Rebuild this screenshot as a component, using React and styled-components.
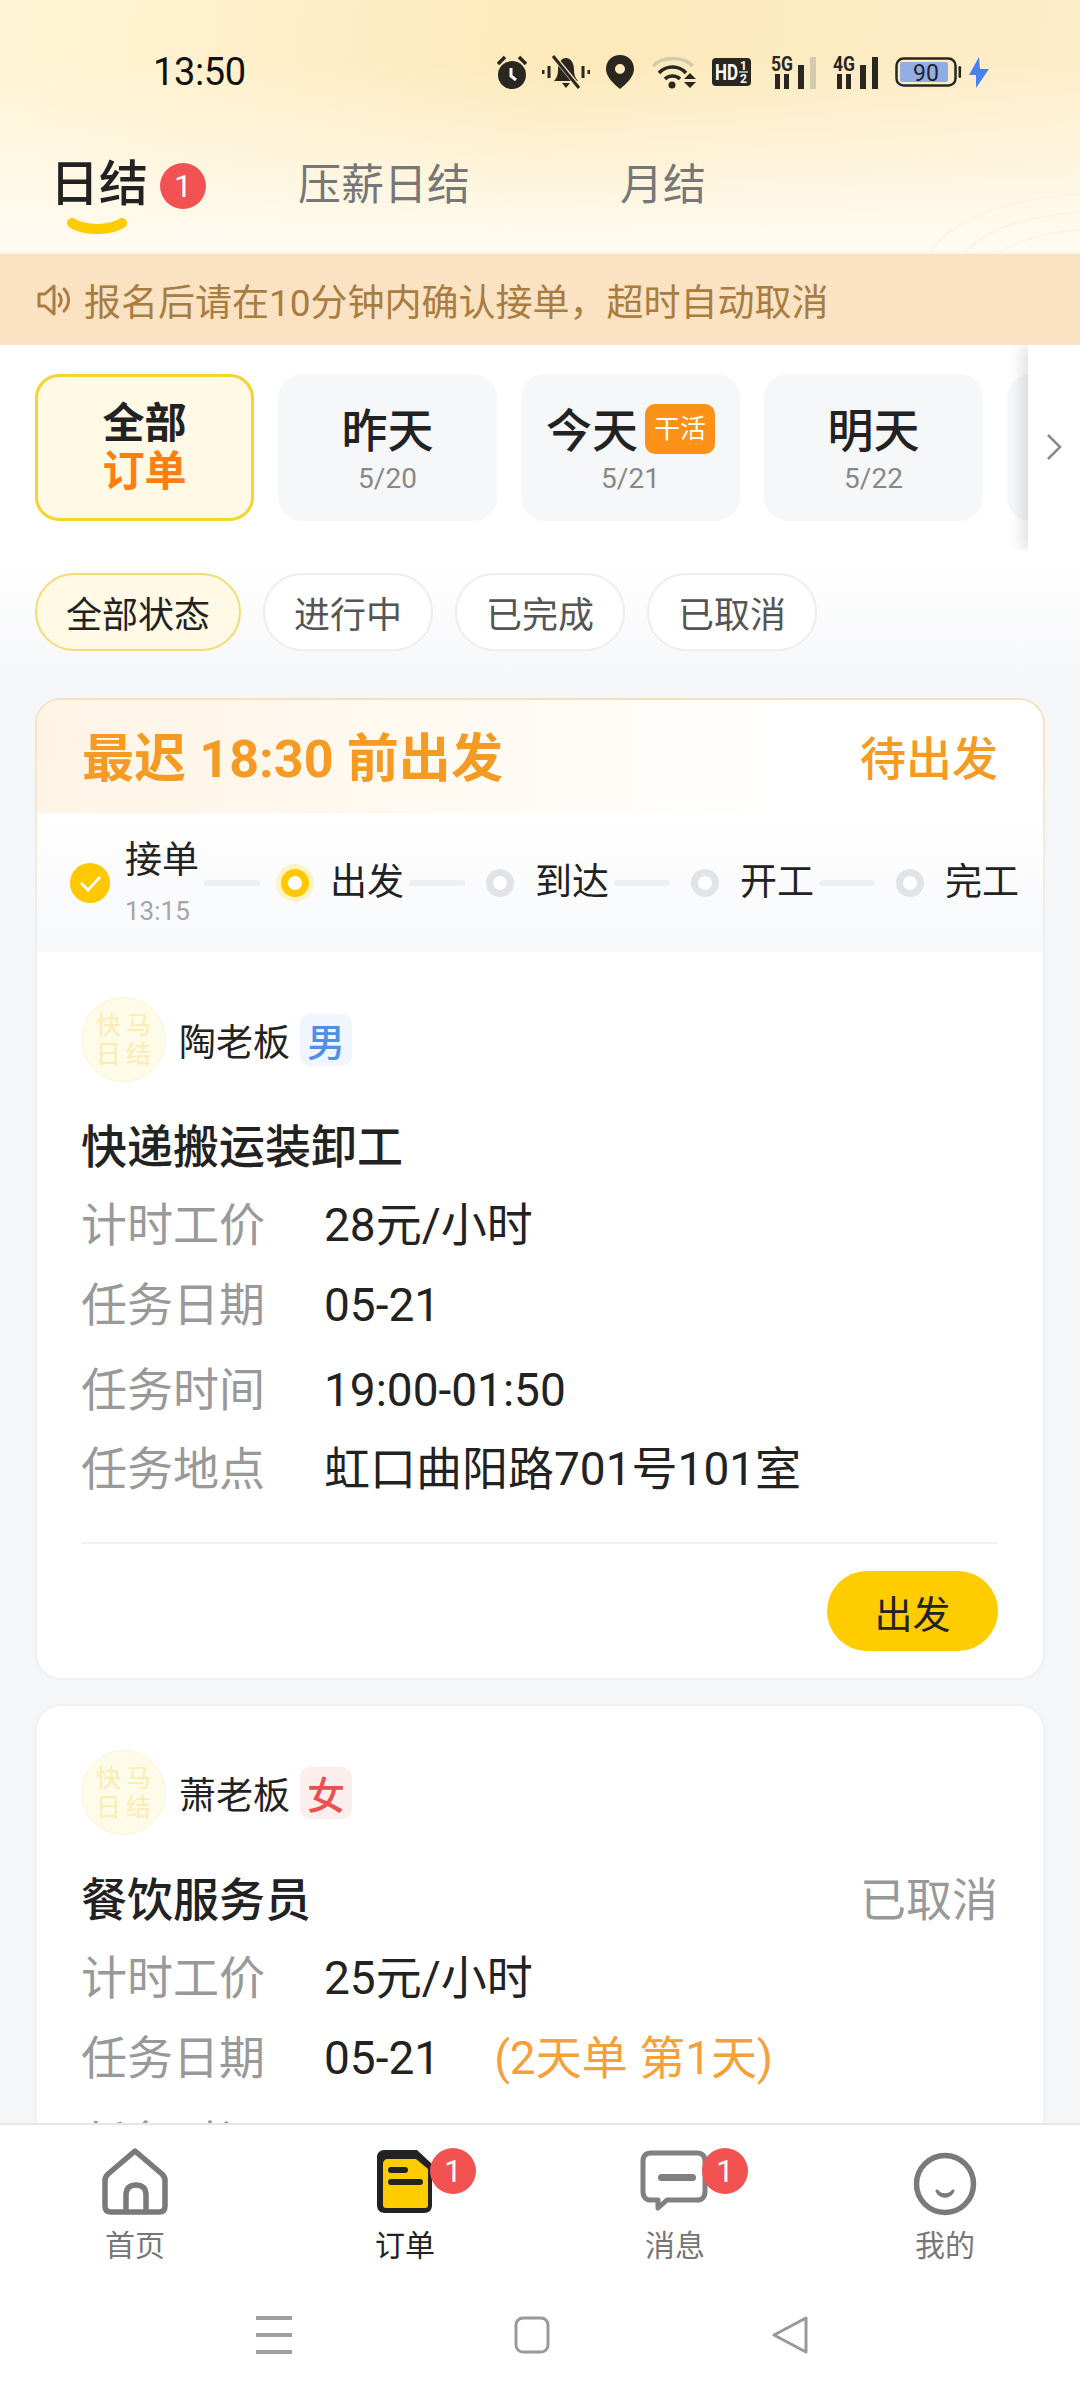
import React from 'react';
import styled, { createGlobalStyle } from 'styled-components';

const Global = createGlobalStyle`
  html, body { margin: 0; padding: 0; background: #fff; }
  body { font-family: Roboto, "Noto Sans CJK SC", sans-serif; color: #222; }
  * { box-sizing: border-box; }
`;

const Page = styled.div`
  width: 1080px; height: 2400px; display: flex; flex-direction: column; overflow: hidden;
  background: linear-gradient(180deg, #fff 0, #fff 560px, #f5f6f8 690px, #f5f6f8 100%);
`;
const Header = styled.header`
  position: relative; height: 254px; flex: none; overflow: hidden;
  border-bottom: 2px solid #fff6e6;
  background:
    linear-gradient(180deg, rgba(255,251,241,0) 25%, #fffbf1 98%),
    linear-gradient(100deg, #fff5d6 0%, #feeec6 30%, #fde9b9 50%, #fdebc2 75%, #feeeca 100%);
`;
const Arcs = styled.svg`
  position: absolute; right: 0; bottom: 0; width: 150px; height: 60px;
`;
const StatusBar = styled.div`
  height: 144px; display: flex; align-items: center; padding-left: 153px;
`;
const Clock = styled.div`
  width: 343px; font-size: 38px; color: #111; line-height: 44px; letter-spacing: -0.4px;
`;
const StatusIcons = styled.div`display: flex; align-items: center;`;
const SIcon = styled.svg`
  flex: none; margin-left: ${p => p.$ml || 0}px; display: block;
`;
const SvgLabel = styled.text`
  font-family: Roboto, sans-serif; font-weight: ${p => p.$w || 700};
`;
const Tabs = styled.nav`display: flex; gap: 150px; padding: 10px 0 0 50px;`;
const Tab = styled.div`
  position: relative; font-size: ${p => p.$active ? 49 : 43}px; line-height: 62px;
  font-weight: ${p => p.$active ? 500 : 400}; color: ${p => p.$active ? '#222' : '#777'};
`;
const Badge = styled.span`
  position: absolute; width: 46px; height: 46px; border-radius: 50%; background: #f25352; color: #fff;
  font-size: 32px; line-height: 46px; text-align: center; font-weight: 400;
  left: ${p => p.$x}px; top: ${p => p.$y}px;
`;
const Smile = styled.svg`position: absolute; left: 16px; top: 64px; width: 62px; height: 24px;`;
const Notice = styled.div`
  height: 91px; flex: none; background: #fae2c2; display: flex; align-items: center; padding-left: 36px;
  gap: 13px; color: #a97c40; font-size: 37px;
`;
const DateSection = styled.section`display: flex; height: 205px; flex: none; overflow: hidden;`;
const DateScroller = styled.div`
  flex: 1; min-width: 0; overflow: hidden; display: flex; gap: 24px; padding: 29px 0 0 35px; align-items: flex-start;
`;
const DateCard = styled.div`
  flex: none; width: 219px; height: 147px; border-radius: 24px; background: ${p => p.$on ? '#fff9e6' : '#f6f7f9'};
  border: ${p => p.$on ? '3px solid #f6d32e' : 'none'};
  display: flex; flex-direction: column; align-items: center; justify-content: center;
  padding-top: ${p => p.$on ? 0 : 5}px;
`;
const AllLine = styled.div`
  font-size: 42px; line-height: 48px; font-weight: 700; color: ${p => p.$c || '#222'};
`;
const DayRow = styled.div`
  display: flex; align-items: center; gap: 7px; font-size: 46px; line-height: 54px; font-weight: 500; color: #222;
`;
const Work = styled.span`
  width: 70px; height: 50px; border-radius: 10px; background: #fb9116; color: #fff; font-size: 26px; font-weight: 400;
  display: flex; align-items: center; justify-content: center; margin-top: -4px;
`;
const DayDate = styled.div`font-size: 28px; line-height: 34px; color: #888; margin-top: 4px;`;
const More = styled.div`
  width: 52px; flex: none; background: #fff; box-shadow: -8px 0 12px rgba(0,0,0,.1);
  display: flex; align-items: flex-start; justify-content: center; padding: 89px 0 0 0;
`;
const Filters = styled.div`display: flex; gap: 22px; padding: 23px 35px 47px; flex: none;`;
const Chip = styled.div`
  height: 78px; border-radius: 39px; padding: 0 29px; font-size: 36px; display: flex; align-items: center;
  border: 2px solid ${p => p.$on ? '#f3dc72' : '#eeeeee'};
  background: ${p => p.$on ? '#fff9e6' : '#fff'}; color: ${p => p.$on ? '#222' : '#555'};
`;
const List = styled.main`
  flex: 1; min-height: 0; overflow: hidden; padding: 0 35px 0 35px; display: flex; flex-direction: column; gap: 24px;
`;
const Card = styled.article`
  flex: none; border-radius: 26px; overflow: hidden; border: 2px solid transparent;
  background:
    linear-gradient(#fff, #fff) padding-box,
    ${p => p.$warm
      ? 'linear-gradient(180deg, #f8dfbd 0, #f8e8d2 120px, #eff0f2 260px) border-box'
      : 'linear-gradient(#f0f1f3, #f0f1f3) border-box'};
`;
const CardHead = styled.div`
  height: 113px; display: flex; align-items: center; justify-content: space-between; padding: 0 45px 4px;
  background: linear-gradient(90deg, #fff4e6 0%, #fffaf3 45%, #fff 75%);
  color: #f59a23;
`;
const Deadline = styled.div`font-size: 52px; font-weight: 700; letter-spacing: 0.1px;`;
const HeadStatus = styled.div`font-size: 46px; font-weight: 500;`;
const Steps = styled.div`
  height: 139px; display: flex; align-items: center; gap: 7px; padding-left: 25px;
  background: linear-gradient(180deg, #fff 0%, #f7f8fa 100%);
`;
const Slot = styled.div`
  width: 56px; height: 56px; flex: none; display: flex; align-items: center; justify-content: center;
`;
const Dot = styled.span`
  border-radius: 50%; display: block; width: 28px; height: 28px; background: #fff;
  ${p => p.$now
    ? 'border:7px solid #ffc800;box-shadow:0 0 0 5px #fff3c4;'
    : 'border:7px solid #e2e3e6;'}
`;
const StepText = styled.div`
  width: 72px; flex: none; display: flex; flex-direction: column; font-size: 37px; line-height: 42px; color: #222;
  white-space: nowrap;
`;
const StepTime = styled.span`font-size: 26px; line-height: 30px; color: #a5a5a8; margin-top: 14px;`;
const StepLine = styled.span`width: 56px; height: 6px; flex: none; background: #eeeff1; border-radius: 3px;`;
const CardBody = styled.div`padding: ${p => p.$top || 45}px 45px 27px 44px;`;
const Boss = styled.div`display: flex; align-items: center; height: 85px;`;
const Avatar = styled.div`
  width: 85px; height: 85px; flex: none; border-radius: 50%; background: #fffbe9; border: 1px solid #fdf4d3; color: #fbecb0;
  font-size: 25px; line-height: 29px; display: grid; grid-template-columns: 28px 28px; justify-content: center; align-content: center;
  justify-items: center; column-gap: 2px;
`;
const BossName = styled.span`font-size: 37px; margin-left: 13px; color: #222;`;
const Sex = styled.span`
  width: 52px; height: 52px; border-radius: 10px; margin-left: 10px; font-size: 38px; font-weight: 500;
  display: flex; align-items: center; justify-content: center;
  background: ${p => p.$f ? '#fdeeee' : '#f0f6ff'}; color: ${p => p.$f ? '#ea5050' : '#4f8fe6'};
`;
const TitleRow = styled.div`
  display: flex; justify-content: space-between; align-items: center; height: 60px; margin: 31px 0 13px;
`;
const JobTitle = styled.div`font-size: 46px; font-weight: 500; color: #222;`;
const Cancelled = styled.div`font-size: 46px; color: #999;`;
const InfoRow = styled.div`
  display: flex; align-items: baseline; line-height: 79px; height: 79px; font-size: 46px; margin-top: ${p => p.$mt || 0}px;
`;
const InfoLabel = styled.span`width: 243px; flex: none; color: #999;`;
const InfoValue = styled.span`color: #222;`;
const Extra = styled.span`color: #f5a03a; margin-left: 54px;`;
const Divider = styled.div`height: 2px; background: #f1f1f2; margin-top: 33px;`;
const Actions = styled.div`display: flex; justify-content: flex-end; margin-top: 27px;`;
const Action = styled.button`
  width: 171px; height: 80px; border-radius: 40px; border: none; background: #ffcc00; color: #222; font: inherit; font-size: 38px;
`;
const BottomNav = styled.footer`
  flex: none; height: 277px; background: #fff; border-top: 2px solid #e6e6e6; display: flex; flex-direction: column;
`;
const NavItems = styled.div`display: grid; grid-template-columns: repeat(4, 270px); padding-top: 23px;`;
const NavItem = styled.div`
  display: flex; flex-direction: column; align-items: center; font-size: 30px; line-height: 40px;
  color: ${p => p.$on ? '#222' : '#777'};
`;
const NavIcon = styled.div`position: relative; width: 70px; height: 70px; margin-bottom: 8px;`;
const SysNav = styled.div`
  display: flex; justify-content: center; gap: 222px; padding: 50px 16px 0 0;
`;

const Alarm = () => (
  <SIcon width="32" height="34" viewBox="0 0 32 34">
    <circle cx="16" cy="20" r="14" fill="#2a2620" />
    <path d="M15 13v8l5 4" fill="none" stroke="#fff" strokeWidth="3" />
    <path d="M2 9 9 2M30 9 23 2" stroke="#2a2620" strokeWidth="3.5" />
  </SIcon>
);
const Bell = () => (
  <SIcon $ml={14} width="48" height="34" viewBox="0 0 48 34">
    <path d="M12 26c3-3 4-7 4-11 0-7 3-12 8-12s8 5 8 12c0 4 1 8 4 11z" fill="#2a2620" />
    <path d="M20 28h8l-4 5z" fill="#2a2620" />
    <path d="M13 3 36 31" stroke="#fde9bc" strokeWidth="5" />
    <path d="M11 1 37 33" stroke="#2a2620" strokeWidth="3" />
    <path d="M1 15v4M7 11v12M41 11v12M47 15v4" stroke="#2a2620" strokeWidth="3" />
  </SIcon>
);
const Pin = () => (
  <SIcon $ml={16} width="28" height="34" viewBox="0 0 28 34">
    <path fillRule="evenodd" d="M14 0c8 0 14 6 14 14 0 8-8 15-14 20C8 29 0 22 0 14 0 6 6 0 14 0zm0 9a5 5 0 1 0 0 10 5 5 0 0 0 0-10z" fill="#2a2620" />
  </SIcon>
);
const Wifi = () => (
  <SIcon $ml={18} width="44" height="33" viewBox="0 0 44 33">
    <path d="M1 10C10 0 31 0 41 10" fill="none" stroke="#d3cab0" strokeWidth="3.5" />
    <path d="M7 17c7-8 20-8 27 0M13 23c4-4 11-4 15 0" fill="none" stroke="#2a2620" strokeWidth="3.5" />
    <circle cx="20" cy="29" r="3.5" fill="#2a2620" />
    <path d="M32 23h12l-6-6zM32 26h12l-6 6z" fill="#2a2620" />
  </SIcon>
);
const HD = () => (
  <SIcon $ml={16} width="39" height="28" viewBox="0 0 39 28">
    <rect width="39" height="28" rx="4" fill="#2a2620" />
    <SvgLabel x="3" y="22" fontSize="22" fill="#fff" textLength="23" lengthAdjust="spacingAndGlyphs">HD</SvgLabel>
    <SvgLabel x="28" y="12" fontSize="12" fill="#fff">1</SvgLabel>
    <SvgLabel x="28" y="25" fontSize="12" fill="#fff">2</SvgLabel>
    <path d="M27 14h9" stroke="#fff" strokeWidth="1.2" />
  </SIcon>
);
const Signal = ({ label, dim, ml }) => (
  <SIcon $ml={ml} width="45" height="33" viewBox="0 0 45 33">
    <SvgLabel x="0" y="15" fontSize="20" fill="#2a2620" textLength="22" lengthAdjust="spacingAndGlyphs">{label}</SvgLabel>
    <path d="M4 18h5v15H4zM13 18h5v15h-5z" fill="#2a2620" />
    <rect x="27" y="9" width="6" height="24" fill="#2a2620" />
    <rect x="39" y="1" width="6" height="32" fill={dim ? '#d3cab0' : '#2a2620'} />
  </SIcon>
);
const Battery = () => (
  <SIcon $ml={17} width="67" height="30" viewBox="0 0 67 30">
    <rect x="1.5" y="1.5" width="59" height="27" rx="7" fill="none" stroke="#2a2620" strokeWidth="2.5" />
    <rect x="5" y="5" width="48" height="20" rx="2" fill="#92ace4" />
    <SvgLabel x="31" y="24" fontSize="23" fill="#1f2430" textAnchor="middle" $w={400}>90</SvgLabel>
    <rect x="63.5" y="9" width="2.6" height="12" rx="1.3" fill="#2a2620" />
  </SIcon>
);
const Bolt = () => (
  <SIcon $ml={7} width="20" height="31" viewBox="0 0 20 31">
    <path d="M10 0 0 18h7l0 13 13-19h-9z" fill="#4a80f0" />
  </SIcon>
);

const HomeIcon = () => (
  <svg width="70" height="70" viewBox="0 0 70 70">
    <path d="M35 3 8 26c-2 2-3 4-3 6v26c0 4 2 6 6 6h48c4 0 6-2 6-6V32c0-2-1-4-3-6z" fill="none" stroke="#7a7a7a" strokeWidth="5.5" strokeLinejoin="round" />
    <path d="M26 64V47c0-7 4-10 10-10s10 3 10 10v17" fill="none" stroke="#7a7a7a" strokeWidth="5.5" />
  </svg>
);
const OrderIcon = () => (
  <svg width="70" height="70" viewBox="0 0 70 70">
    <path d="M14 2h33l15 14v41c0 5-3 8-8 8H15c-5 0-8-3-8-8V9c0-4 3-7 7-7z" fill="#222" />
    <path d="M18 11h28l12 10v36c0 2-1 3-3 3H16c-2 0-3-1-3-3V16c0-3 2-5 5-5z" fill="#ffcc00" />
    <rect x="18" y="19" width="20" height="6" rx="3" fill="#222" />
    <rect x="18" y="31" width="35" height="6" rx="3" fill="#222" />
  </svg>
);
const MsgIcon = () => (
  <svg width="70" height="70" viewBox="0 0 70 70">
    <path d="M11 5h46c5 0 8 3 8 8v31c0 5-3 8-8 8H27l-9 8v-8h-7c-5 0-8-3-8-8V13c0-5 3-8 8-8z" fill="none" stroke="#808080" strokeWidth="5" strokeLinejoin="round" />
    <rect x="18" y="26" width="38" height="7" rx="3.5" fill="#808080" />
  </svg>
);
const MeIcon = () => (
  <svg width="70" height="70" viewBox="0 0 70 70">
    <circle cx="35" cy="36" r="28.5" fill="none" stroke="#7a7a7a" strokeWidth="5.5" />
    <path d="M27 43c4 5 12 5 16 0-3 7-13 7-16 0z" fill="#7a7a7a" stroke="#7a7a7a" strokeWidth="3" strokeLinejoin="round" />
  </svg>
);

const AvatarMark = () => (
  <Avatar><span>快</span><span>马</span><span>日</span><span>结</span></Avatar>
);
const Info = ({ label, children, mt }) => (
  <InfoRow $mt={mt}><InfoLabel>{label}</InfoLabel><InfoValue>{children}</InfoValue></InfoRow>
);

export default function App() {
  return (
    <Page>
      <Global />
      <Header>
        <Arcs viewBox="0 0 150 60">
          <path d="M0 60C25 25 80 6 150 2M35 60C55 38 95 24 150 20M70 60C90 48 118 40 150 38" fill="none" stroke="#fdf5e3" strokeWidth="2" />
        </Arcs>
        <StatusBar>
          <Clock>13:50</Clock>
          <StatusIcons>
            <Alarm /><Bell /><Pin /><Wifi /><HD />
            <Signal label="5G" dim ml={20} /><Signal label="4G" ml={17} />
            <Battery /><Bolt />
          </StatusIcons>
        </StatusBar>
        <Tabs>
          <Tab $active>日结
            <Badge $x={110} $y={9}>1</Badge>
            <Smile viewBox="0 0 62 24"><path d="M6 5c12 8 38 8 50 0" fill="none" stroke="#ffcc00" strokeWidth="10" strokeLinecap="round" /></Smile>
          </Tab>
          <Tab>压薪日结</Tab>
          <Tab>月结</Tab>
        </Tabs>
      </Header>
      <Notice>
        <svg width="35" height="34" viewBox="0 0 35 34">
          <path d="M3 11h6l9-8v28l-9-8H3z" fill="none" stroke="#a97c40" strokeWidth="3" strokeLinejoin="round" />
          <path d="M23 11c3 3 3 9 0 12M28 6c6 6 6 16 0 22" fill="none" stroke="#a97c40" strokeWidth="3" strokeLinecap="round" />
        </svg>
        报名后请在10分钟内确认接单，超时自动取消
      </Notice>
      <DateSection>
        <DateScroller>
          <DateCard $on><AllLine>全部</AllLine><AllLine $c="#ff7f0e">订单</AllLine></DateCard>
          <DateCard><DayRow>昨天</DayRow><DayDate>5/20</DayDate></DateCard>
          <DateCard><DayRow>今天<Work>干活</Work></DayRow><DayDate>5/21</DayDate></DateCard>
          <DateCard><DayRow>明天</DayRow><DayDate>5/22</DayDate></DateCard>
          <DateCard />
        </DateScroller>
        <More>
          <svg width="16" height="26" viewBox="0 0 16 26"><path d="M2 1l12 12L2 25" fill="none" stroke="#8c8c8c" strokeWidth="2.6" /></svg>
        </More>
      </DateSection>
      <Filters>
        <Chip $on>全部状态</Chip><Chip>进行中</Chip><Chip>已完成</Chip><Chip>已取消</Chip>
      </Filters>
      <List>
        <Card $warm>
          <CardHead><Deadline>最迟 18:30 前出发</Deadline><HeadStatus>待出发</HeadStatus></CardHead>
          <Steps>
            <Slot>
              <svg width="40" height="40" viewBox="0 0 40 40"><circle cx="20" cy="20" r="20" fill="#ffc800" /><path d="M11 20l7 7 12-13" fill="none" stroke="#fff" strokeWidth="2.6" /></svg>
            </Slot>
            <StepText>接单<StepTime>13:15</StepTime></StepText>
            <StepLine />
            <Slot><Dot $now /></Slot><StepText>出发</StepText><StepLine />
            <Slot><Dot /></Slot><StepText>到达</StepText><StepLine />
            <Slot><Dot /></Slot><StepText>开工</StepText><StepLine />
            <Slot><Dot /></Slot><StepText>完工</StepText>
          </Steps>
          <CardBody>
            <Boss><AvatarMark /><BossName>陶老板</BossName><Sex>男</Sex></Boss>
            <TitleRow><JobTitle>快递搬运装卸工</JobTitle></TitleRow>
            <Info label="计时工价">28元/小时</Info>
            <Info label="任务日期" mt={1}>05-21</Info>
            <Info label="任务时间" mt={6}>19:00-01:50</Info>
            <Info label="任务地点">虹口曲阳路701号101室</Info>
            <Divider />
            <Actions><Action>出发</Action></Actions>
          </CardBody>
        </Card>
        <Card>
          <CardBody $top={44}>
            <Boss><AvatarMark /><BossName>萧老板</BossName><Sex $f>女</Sex></Boss>
            <TitleRow><JobTitle>餐饮服务员</JobTitle><Cancelled>已取消</Cancelled></TitleRow>
            <Info label="计时工价">25元/小时</Info>
            <Info label="任务日期" mt={1}>05-21<Extra>(2天单 第1天)</Extra></Info>
            <Info label="任务时间" mt={6} />
          </CardBody>
        </Card>
      </List>
      <BottomNav>
        <NavItems>
          <NavItem><NavIcon><HomeIcon /></NavIcon>首页</NavItem>
          <NavItem $on><NavIcon><OrderIcon /><Badge $x={60} $y={0}>1</Badge></NavIcon>订单</NavItem>
          <NavItem><NavIcon><MsgIcon /><Badge $x={62} $y={0}>1</Badge></NavIcon>消息</NavItem>
          <NavItem><NavIcon><MeIcon /></NavIcon>我的</NavItem>
        </NavItems>
        <SysNav>
          <svg width="36" height="38" viewBox="0 0 36 38"><path d="M0 2h36M0 19h36M0 36h36" stroke="#a0a0a0" strokeWidth="4" /></svg>
          <svg width="36" height="38" viewBox="0 0 36 38"><rect x="2" y="2" width="32" height="34" rx="7" fill="none" stroke="#999" strokeWidth="3" /></svg>
          <svg width="36" height="38" viewBox="0 0 36 38"><path d="M34 2v34L2 19z" fill="none" stroke="#999" strokeWidth="3" strokeLinejoin="round" /></svg>
        </SysNav>
      </BottomNav>
    </Page>
  );
}
